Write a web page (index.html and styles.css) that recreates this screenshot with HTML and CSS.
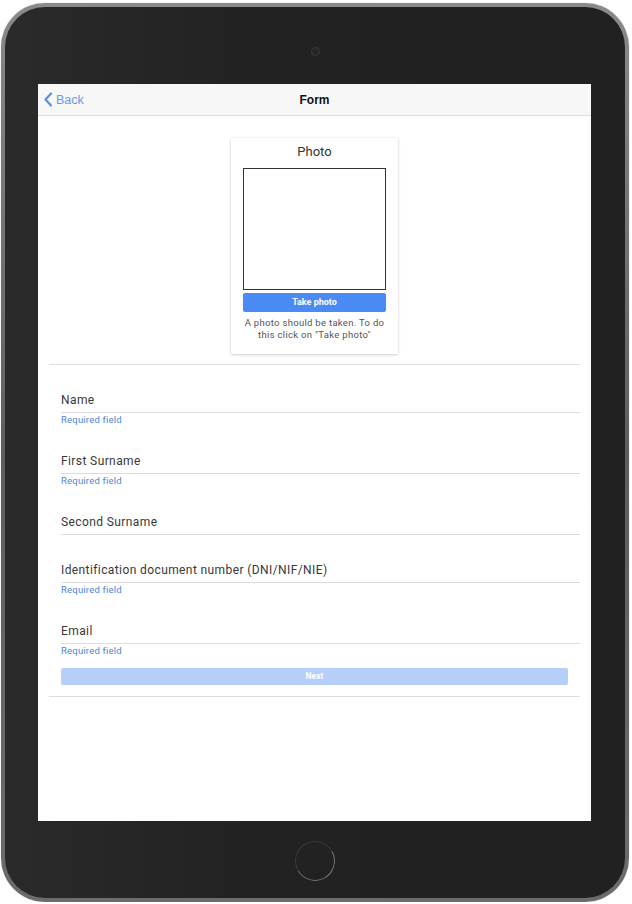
FILE: index.html
```html
<!DOCTYPE html>
<html>
<head>
<meta charset="utf-8">
<link rel="stylesheet" href="styles.css">
</head>
<body>
<div class="device">
  <div class="bezel">
    <div class="camera"></div>
    <div class="screen">
      <div class="navbar">
        <div class="back">
          <svg width="10" height="15" viewBox="0 0 10 15"><path d="M8 1.5 L2.5 7.5 L8 13.5" fill="none" stroke="#5b8fe2" stroke-width="2.2" stroke-linecap="round" stroke-linejoin="round"/></svg>
          <span>Back</span>
        </div>
        <div class="title">Form</div>
        <div class="spacer"></div>
      </div>
      <div class="content">
        <div class="card">
          <div class="card-title">Photo</div>
          <div class="photo-box"></div>
          <div class="btn-take">Take photo</div>
          <div class="card-note">A photo should be taken. To do this click on "Take photo"</div>
        </div>
        <div class="divider"></div>
        <div class="form">
          <div class="field">
            <div class="label">Name</div>
            <div class="req">Required field</div>
          </div>
          <div class="field">
            <div class="label">First Surname</div>
            <div class="req">Required field</div>
          </div>
          <div class="field">
            <div class="label">Second Surname</div>
          </div>
          <div class="field">
            <div class="label">Identification document number (DNI/NIF/NIE)</div>
            <div class="req">Required field</div>
          </div>
          <div class="field">
            <div class="label">Email</div>
            <div class="req">Required field</div>
          </div>
          <div class="btn-next">Next</div>
        </div>
        <div class="divider"></div>
      </div>
    </div>
    <div class="home"></div>
  </div>
</div>
</body>
</html>
```
FILE: styles.css
```css
* { box-sizing: border-box; }
html, body { margin: 0; padding: 0; background: #ffffff; }
body { font-family: Roboto, "Liberation Sans", sans-serif; }

.device {
  margin: 3px 0 0 1px;
  width: 628px;
  height: 899px;
  border-radius: 44px;
  padding: 4px;
  background: linear-gradient(180deg, #8a8a8a 0%, #5e5e5e 50%, #6c6c6c 100%);
  box-shadow: 0 0 1px rgba(0,0,0,0.4);
}
.bezel {
  height: 100%;
  border-radius: 40px;
  background: linear-gradient(90deg, #2a2a2a 0%, #222222 40%, #212121 100%);
  display: flex;
  flex-direction: column;
  align-items: center;
}
.camera {
  margin-top: 40px;
  width: 9px;
  height: 9px;
  border-radius: 50%;
  background: #262626;
  border: 1.5px solid #3b3b3b;
}
.screen {
  margin-top: 28px;
  align-self: flex-start;
  margin-left: 33px;
  width: 553px;
  height: 737px;
  background: #fff;
  display: flex;
  flex-direction: column;
}
.home {
  margin-top: 20px;
  width: 40px;
  height: 40px;
  border-radius: 50%;
  border: 1.5px solid #3a3a3a;
  border-right-color: #7a7a7a;
  border-bottom-color: #6a6a6a;
  transform: rotate(15deg);
}

.navbar {
  height: 32px;
  background: #f7f7f7;
  border-bottom: 1px solid #dcdcdc;
  display: flex;
  align-items: center;
  padding: 0 5px;
}
.back {
  width: 100px;
  display: flex;
  align-items: center;
  gap: 3px;
  color: #6a9ae4;
  font-family: "Liberation Sans", Arial, sans-serif;
  font-size: 12.5px;
}
.back svg { display: block; }
.title {
  flex: 1;
  text-align: center;
  font-family: "Liberation Sans", Arial, sans-serif;
  font-weight: bold;
  font-size: 12px;
  color: #111;
}
.spacer { width: 100px; }

.content {
  display: flex;
  flex-direction: column;
  padding: 0 11px;
}
.card {
  align-self: center;
  margin-top: 22px;
  width: 167px;
  padding: 6px 12px 13px;
  background: #fff;
  box-shadow: 0 1px 3px rgba(0,0,0,0.18), 0 0 1px rgba(0,0,0,0.12);
  display: flex;
  flex-direction: column;
  align-items: center;
}
.card-title {
  font-size: 13px;
  line-height: 16px;
  color: #333;
}
.photo-box {
  margin-top: 8px;
  width: 143px;
  height: 122px;
  border: 1px solid #333;
}
.btn-take {
  margin-top: 3px;
  width: 143px;
  height: 19px;
  border-radius: 2px;
  background: #4a8af4;
  color: #fff;
  font-size: 9px;
  font-weight: bold;
  line-height: 19px;
  text-align: center;
}
.card-note {
  margin-top: 5px;
  font-size: 9.5px;
  line-height: 12px;
  letter-spacing: 0.3px;
  color: #555;
  text-align: center;
}
.divider {
  margin-top: 10px;
  height: 1px;
  background: #dedede;
}
.form {
  padding-left: 12px;
  display: flex;
  flex-direction: column;
}
.field { margin-top: 27px; }
.label {
  font-size: 12px;
  line-height: 16px;
  letter-spacing: 0.4px;
  padding-bottom: 4px;
  border-bottom: 1px solid #dcdcdc;
  color: #383838;
}
.req {
  margin-top: 1px;
  font-size: 9.5px;
  line-height: 12px;
  letter-spacing: 0.2px;
  color: #4a86d8;
}
.btn-next {
  margin-top: 11px;
  margin-right: 12px;
  height: 17px;
  border-radius: 2px;
  background: #b6cff8;
  color: #fff;
  font-size: 8.5px;
  font-weight: bold;
  line-height: 17px;
  text-align: center;
}
.form + .divider { margin-top: 11px; }
```
